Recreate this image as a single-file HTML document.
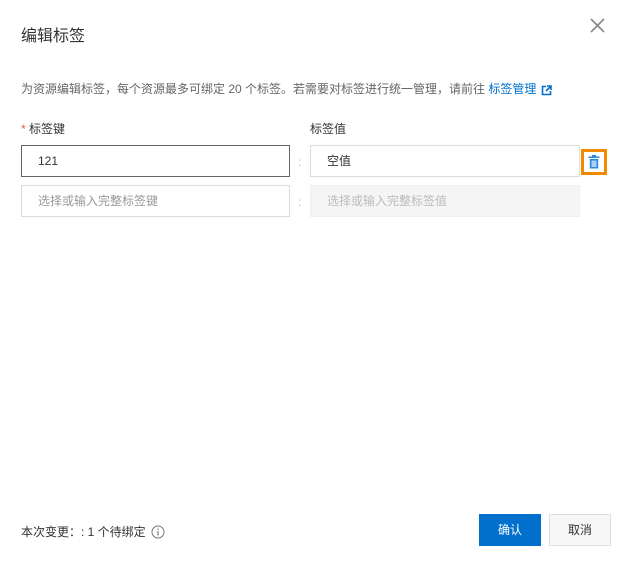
<!DOCTYPE html>
<html><head><meta charset="utf-8"><style>
*{box-sizing:border-box;margin:0;padding:0}
body{width:630px;height:566px;background:#fff;font-family:"Liberation Sans","Noto Sans CJK SC",sans-serif;position:relative;overflow:hidden;color:#333}
.a{position:absolute;white-space:nowrap}
.inp{position:absolute;height:32px;border:1px solid #dcdcdc;background:#fff;font-size:12px;line-height:30px;padding-left:16px}
</style></head><body>
<div class="a" style="left:21px;top:22px;font-size:16px;color:#333">编辑标签</div>
<svg class="a" style="left:590px;top:18px" width="15" height="15" viewBox="0 0 15 15"><path d="M1 1L14 14M14 1L1 14" stroke="#888" stroke-width="1.6"/></svg>
<div class="a" style="left:21px;top:80px;font-size:12px;color:#666">为资源编辑标签，每个资源最多可绑定 20 个标签。若需要对标签进行统一管理，请前往 <span style="color:#0070cc">标签管理</span></div>
<svg class="a" style="left:541px;top:85px" width="11" height="11" viewBox="0 0 11 11"><path d="M5 1.5H1.5V9.5H9.5V6" fill="none" stroke="#0070cc" stroke-width="1.6"/><path d="M6 1H10V5M10 1L5 6" fill="none" stroke="#0070cc" stroke-width="1.6"/></svg>
<div class="a" style="left:21px;top:120px;font-size:12px;color:#333"><span style="color:#e55;">*</span> 标签键</div>
<div class="a" style="left:310px;top:120px;font-size:12px;color:#333">标签值</div>
<div class="inp" style="left:21px;top:145px;width:269px;border-color:#666;color:#333">121</div>
<div class="a" style="left:298px;top:155px;font-size:12px;color:#bbb">:</div>
<div class="inp" style="left:310px;top:145px;width:270px;color:#333">空值</div>
<div class="a" style="left:581px;top:149px;width:26px;height:26px;border:3px solid #f28a00"></div>
<svg class="a" style="left:588px;top:155px" width="12" height="14" viewBox="0 0 12 14"><rect x="0.5" y="1.5" width="11" height="1.5" fill="#2b8ae0"/><rect x="4" y="0" width="4" height="2" fill="#2b8ae0"/><path d="M1.8 4H10.2V13.5H1.8Z" fill="#2b8ae0"/><rect x="3.5" y="5.5" width="5" height="6.5" fill="#a9d0f5"/></svg>
<div class="inp" style="left:21px;top:185px;width:269px;color:#999">选择或输入完整标签键</div>
<div class="a" style="left:298px;top:195px;font-size:12px;color:#bbb">:</div>
<div class="inp" style="left:310px;top:185px;width:270px;background:#f5f5f5;border-color:#f0f0f0;color:#bbb">选择或输入完整标签值</div>
<div class="a" style="left:21px;top:523px;font-size:12px;color:#333">本次变更：: 1 个待绑定</div>
<svg class="a" style="left:151px;top:525px" width="14" height="14" viewBox="0 0 14 14"><circle cx="7" cy="7" r="6" fill="none" stroke="#777" stroke-width="1"/><rect x="6.4" y="6" width="1.2" height="4.5" fill="#777"/><rect x="6.4" y="3.6" width="1.2" height="1.3" fill="#777"/></svg>
<div class="a" style="left:479px;top:514px;width:62px;height:32px;background:#0070cc;color:#fff;font-size:12px;line-height:32px;text-align:center">确认</div>
<div class="a" style="left:549px;top:514px;width:62px;height:32px;background:#f7f7f7;border:1px solid #ddd;color:#333;font-size:12px;line-height:30px;text-align:center">取消</div>
</body></html>
